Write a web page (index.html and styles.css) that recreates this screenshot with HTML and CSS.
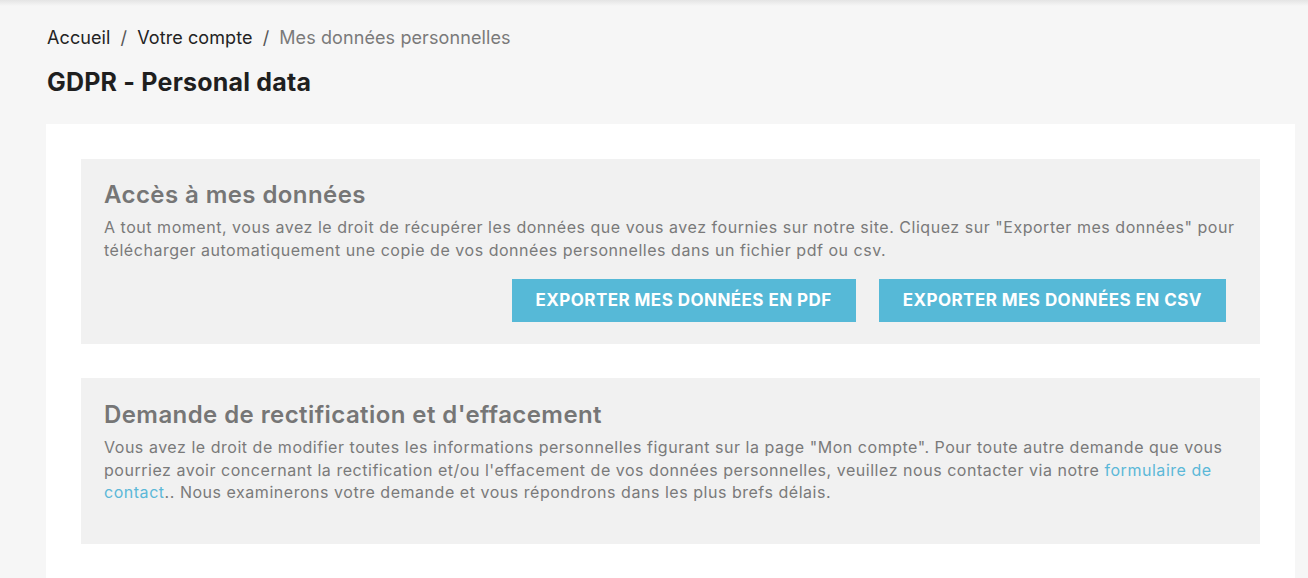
FILE: index.html
```html
<!DOCTYPE html>
<html lang="fr">
<head>
<meta charset="utf-8">
<title>GDPR - Personal data</title>
<link rel="stylesheet" href="styles.css">
</head>
<body>
<div class="topshadow"></div>
<main class="page">
  <nav class="breadcrumb">
    <a class="crumb" href="#">Accueil</a>
    <span class="sep">/</span>
    <a class="crumb" href="#">Votre compte</a>
    <span class="sep">/</span>
    <span class="crumb current">Mes données personnelles</span>
  </nav>
  <h1 class="title">GDPR - Personal data</h1>
  <section class="card">
    <div class="box box-access">
      <h2 class="box-title">Accès à mes données</h2>
      <p class="box-text">A tout moment, vous avez le droit de récupérer les données que vous avez fournies sur notre site. Cliquez sur "Exporter mes données" pour télécharger automatiquement une copie de vos données personnelles dans un fichier pdf ou csv.</p>
      <div class="actions">
        <a class="btn" href="#">Exporter mes données en PDF</a>
        <a class="btn" href="#">Exporter mes données en CSV</a>
      </div>
    </div>
    <div class="box box-rect">
      <h2 class="box-title">Demande de rectification et d'effacement</h2>
      <p class="box-text">Vous avez le droit de modifier toutes les informations personnelles figurant sur la page "Mon compte". Pour toute autre demande que vous pourriez avoir concernant la rectification et/ou l'effacement de vos données personnelles, veuillez nous contacter via notre <a class="link" href="#">formulaire de contact</a>.. Nous examinerons votre demande et vous répondrons dans les plus brefs délais.</p>
    </div>
  </section>
</main>
</body>
</html>
```

FILE: styles.css
```css
html, body {
  margin: 0;
  padding: 0;
}
body {
  background: #f6f6f6;
  font-family: Inter, "Noto Sans", sans-serif;
  color: #222;
  height: 578px;
  overflow: hidden;
}
.topshadow {
  height: 6px;
  background: linear-gradient(#e4e4e4, #f6f6f6);
}
.page {
  padding: 0 13px 0 46px;
}
.breadcrumb {
  margin-top: 20px;
  padding-left: 1px;
  font-size: 18px;
  line-height: 24px;
  letter-spacing: 0.1px;
  display: flex;
  gap: 10px;
}
.crumb {
  color: #232323;
  text-decoration: none;
}
.sep {
  color: #555;
}
.current {
  color: #7a7a7a;
}
.title {
  margin: 17px 0 0 1px;
  font-size: 25px;
  line-height: 30px;
  font-weight: 700;
  letter-spacing: 0.2px;
  color: #1f1f1f;
}
.card {
  margin-top: 27px;
  background: #fff;
  padding: 35px 35px 40px;
}
.box {
  background: #f1f1f1;
  padding: 21px 23px 22px 23px;
}
.box + .box {
  margin-top: 34px;
}
.box-rect {
  padding-top: 22px;
  padding-bottom: 40px;
}
.box-title {
  margin: 0;
  font-size: 24px;
  line-height: 30px;
  font-weight: 600;
  letter-spacing: 0.42px;
  color: #767676;
}
.box-text {
  margin: 6px 0 0;
  font-size: 16px;
  line-height: 22.5px;
  letter-spacing: 0.53px;
  color: #7a7a7a;
}
.link {
  color: #5bb8d8;
  text-decoration: none;
}
.actions {
  display: flex;
  justify-content: flex-end;
  gap: 23px;
  margin-top: 18px;
  padding-right: 11px;
}
.btn {
  display: block;
  background: #56b9d7;
  color: #fff;
  text-decoration: none;
  text-transform: uppercase;
  font-weight: 700;
  font-size: 17px;
  line-height: 43px;
  padding: 0 24px;
  letter-spacing: 0.45px;
}
```
